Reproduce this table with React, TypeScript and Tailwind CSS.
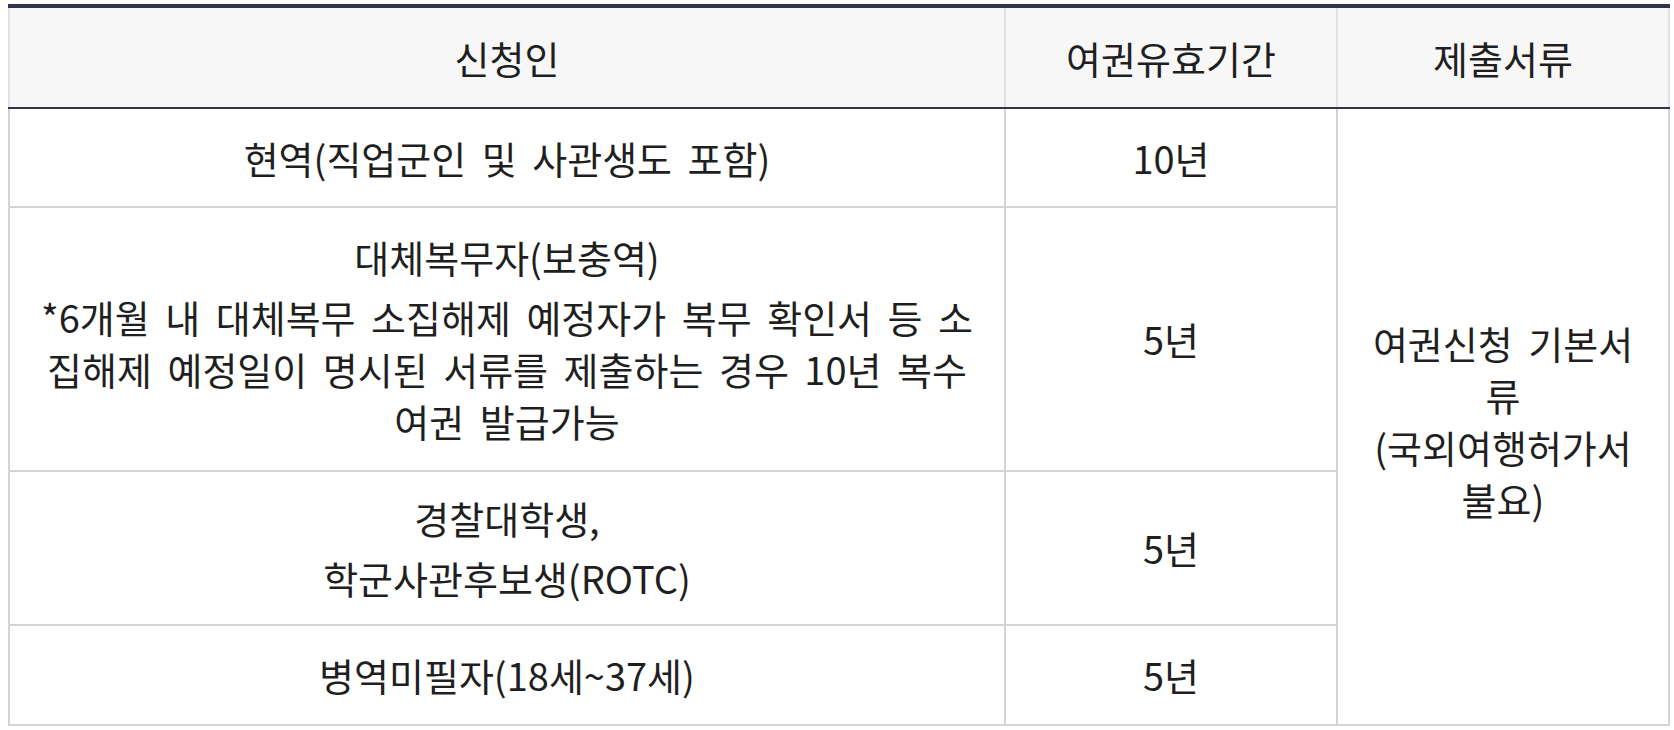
import React from "react";

const font = { fontFamily: '"Noto Sans CJK KR", "Noto Sans", sans-serif' };

export default function App() {
  const cell =
    "flex items-center justify-center text-center border-l-2 border-b-2 border-[#d4d4d4]";
  return (
    <div className="bg-white w-[1674px] h-[730px] pt-1 pl-2" style={font}>
      <div className="w-[1662px] border-t-4 border-[#33334f] text-[38px] leading-[52px] [word-spacing:7px] text-[#1f1f1f]">
        <div className="grid grid-cols-[996px_332px_334px] h-[101px] bg-[#f7f7f7] border-b-2 border-[#33334f]">
          <div className="flex items-center justify-center border-l-2 border-[#e2e2e2]">신청인</div>
          <div className="flex items-center justify-center border-l-2 border-[#e2e2e2]">여권유효기간</div>
          <div className="flex items-center justify-center border-l-2 border-r-2 border-[#e2e2e2]">제출서류</div>
        </div>
        <div className="grid grid-cols-[996px_332px_334px] grid-rows-[99px_264px_154px_100px]">
          <div className={cell}>현역(직업군인 및 사관생도 포함)</div>
          <div className={cell}>10년</div>
          <div className={`${cell} row-span-4 border-r-2`}>
            <div className="whitespace-nowrap pt-2">
              여권신청 기본서
              <br />류
              <br />(국외여행허가서
              <br />불요)
            </div>
          </div>

          <div className={cell}>
            <div className="whitespace-nowrap">
              <div className="mb-2">대체복무자(보충역)</div>
              <div>
                *6개월 내 대체복무 소집해제 예정자가 복무 확인서 등 소
                <br />
                집해제 예정일이 명시된 서류를 제출하는 경우 10년 복수
                <br />
                여권 발급가능
              </div>
            </div>
          </div>
          <div className={cell}>5년</div>

          <div className={cell}>
            <div className="whitespace-nowrap">
              <div className="mb-2">경찰대학생,</div>
              <div>학군사관후보생(ROTC)</div>
            </div>
          </div>
          <div className={cell}>5년</div>

          <div className={cell}>병역미필자(18세~37세)</div>
          <div className={cell}>5년</div>
        </div>
      </div>
    </div>
  );
}
